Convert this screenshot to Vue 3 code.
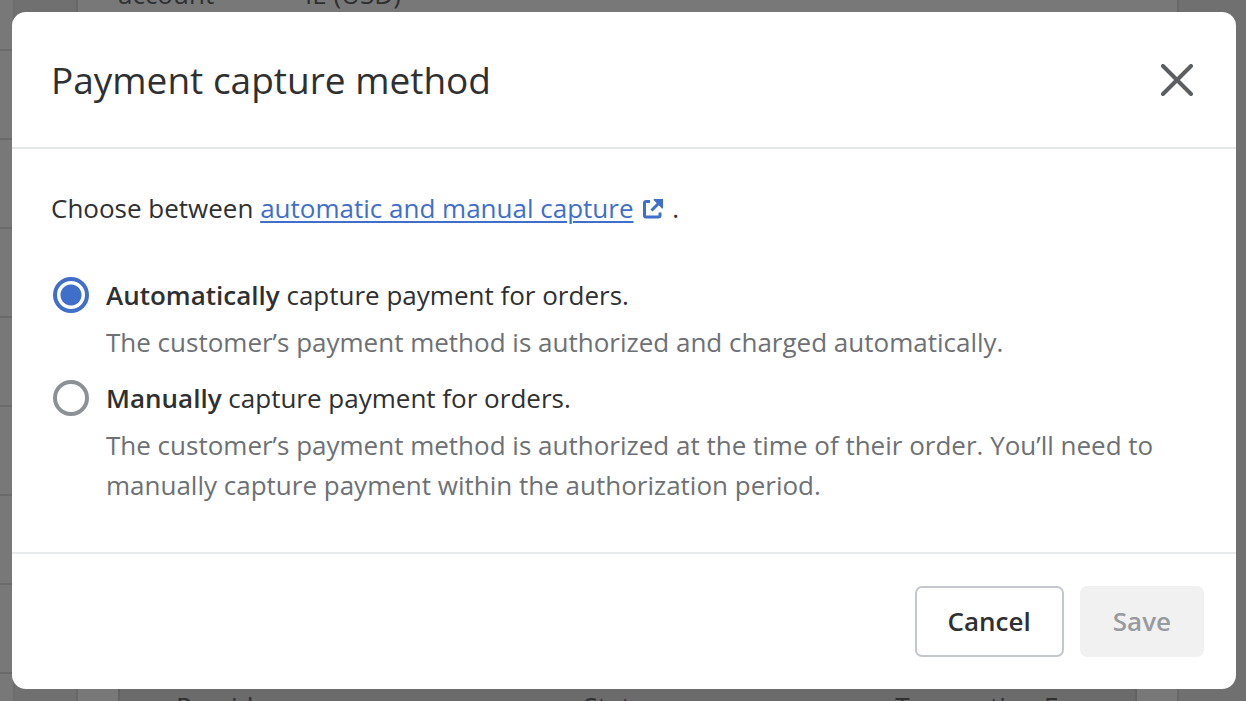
<template>
  <div class="page">
    <div class="shop" aria-hidden="true">
      <div class="shop-nav">
        <div v-for="n in 8" :key="n" class="shop-nav-item"></div>
      </div>
      <div class="shop-main">
        <div class="shop-card">
          <div class="account-row">
            <span class="account-label">account</span>
            <span>IE (USD)</span>
          </div>
          <div class="provider-row">
            <span v-for="column in columns" :key="column">{{ column }}</span>
          </div>
        </div>
      </div>
    </div>

    <div class="backdrop">
      <form
        class="modal"
        role="dialog"
        aria-modal="true"
        aria-labelledby="modal-title"
        @submit.prevent="save"
      >
        <header class="modal-header">
          <h2 id="modal-title" class="modal-title">Payment capture method</h2>
          <button type="button" class="close-button" aria-label="Close">
            <svg viewBox="0 0 32 32" width="32" height="32">
              <path d="M2 2 L30 30 M30 2 L2 30" />
            </svg>
          </button>
        </header>

        <div class="modal-body">
          <p class="intro">
            Choose between
            <a href="#" class="link">automatic and manual capture</a>
            <svg class="external-icon" viewBox="0 0 22 20" width="22" height="20">
              <path d="M8 2.5 H4 Q2.5 2.5 2.5 4 V16.5 Q2.5 18 4 18 H16.5 Q18 18 18 16.5 V13.5" />
              <path d="M9.5 11.5 L18 3" />
              <path class="external-head" d="M12 0 H21 V9.5 H20 L11.5 1 Z" />
            </svg>
            .
          </p>

          <div v-for="option in options" :key="option.value" class="option">
            <input
              :id="option.value"
              v-model="selected"
              type="radio"
              name="capture"
              class="option-radio"
              :value="option.value"
              :aria-describedby="`${option.value}-help`"
            >
            <div class="option-text">
              <label :for="option.value" class="option-label">
                <strong>{{ option.name }}</strong> capture payment for orders.
              </label>
              <p :id="`${option.value}-help`" class="option-help">{{ option.help }}</p>
            </div>
          </div>
        </div>

        <footer class="modal-footer">
          <button type="button" class="btn" @click="selected = saved">Cancel</button>
          <button type="submit" class="btn btn-save" :disabled="selected === saved">Save</button>
        </footer>
      </form>
    </div>
  </div>
</template>

<script setup>
import { ref } from 'vue'

const columns = ['Provider', 'Status', 'Transaction Fee']

const options = [
  {
    value: 'automatic',
    name: 'Automatically',
    help: 'The customer’s payment method is authorized and charged automatically.'
  },
  {
    value: 'manual',
    name: 'Manually',
    help: 'The customer’s payment method is authorized at the time of their order. You’ll need to manually capture payment within the authorization period.'
  }
]

const saved = ref('automatic')
const selected = ref('automatic')

const save = () => {
  saved.value = selected.value
}
</script>

<style>
body {
  margin: 0;
  background: #747474;
}
</style>

<style scoped>
.page {
  position: relative;
  height: 100vh;
  overflow: hidden;
  font-family: "Open Sans", "Noto Sans", sans-serif;
  font-size: 26px;
  line-height: 40px;
  color: #2e3032;
}

.shop {
  display: flex;
  height: 100%;
  background: #747474;
}

.shop-nav {
  width: 13px;
  margin-top: -38px;
  border-right: 2px solid #6c6c6c;
  background: #787878;
}

.shop-nav-item {
  height: 87px;
  border-bottom: 2px solid #6a6a6a;
}

.shop-main {
  flex: 1;
  padding: 0 67px 0 61px;
  background: #707070;
}

.shop-card {
  display: flex;
  flex-direction: column;
  justify-content: space-between;
  height: 100%;
  padding: 0 40px;
  border: solid #686868;
  border-width: 0 2px;
  box-sizing: border-box;
  background: #787878;
}

.account-row {
  display: flex;
  margin-top: -26px;
}

.account-label {
  width: 187px;
}

.provider-row {
  display: grid;
  grid-template-columns: 408fr 312fr 240fr;
  height: 15px;
  padding: 16px 0 0 56px;
  border: solid #626262;
  border-width: 0 2px;
  background: #6b6b6b;
  white-space: nowrap;
}

.backdrop {
  position: absolute;
  inset: 0;
  padding: 12px 10px 13px 12px;
}

.modal {
  display: flex;
  flex-direction: column;
  border-radius: 14px;
  background: #fff;
}

.modal-header {
  display: flex;
  align-items: center;
  justify-content: space-between;
  padding: 40px 43px 39px 39px;
  border-bottom: 2px solid #e4e6e8;
}

.modal-title {
  margin: 0;
  font-size: 37px;
  font-weight: 400;
  line-height: 56px;
}

.close-button {
  display: flex;
  padding: 0;
  border: 0;
  background: none;
  cursor: pointer;
}

.close-button svg {
  fill: none;
  stroke: #5c5f62;
  stroke-width: 4;
  stroke-linecap: round;
}

.modal-body {
  padding: 39px 39px 47px;
}

.intro {
  margin: 0 0 47px;
}

.link {
  color: #3f6fcb;
  text-decoration-thickness: 2px;
  text-underline-offset: 3px;
}

.external-icon {
  margin: 0 2px 0 8px;
  fill: none;
  stroke: #3f6fcb;
  stroke-width: 3;
  vertical-align: -1px;
}

.external-head {
  fill: #3f6fcb;
  stroke: none;
}

.option {
  display: flex;
  gap: 17px;
  margin-bottom: 16px;
}

.option:last-child {
  margin-bottom: 0;
}

.option-radio {
  flex: none;
  width: 36px;
  height: 36px;
  margin: 2px 0 0 2px;
  border: 4px solid #8c9196;
  border-radius: 50%;
  background: #fff;
  appearance: none;
}

.option-radio:checked {
  border-color: #3f6fcb;
  background: radial-gradient(circle, #3f6fcb 10px, #fff 11px);
}

.option-label {
  display: block;
}

.option-label strong {
  font-weight: 600;
}

.option-help {
  margin: 7px 0 0;
  color: #6d7175;
}

.modal-footer {
  display: flex;
  justify-content: flex-end;
  gap: 16px;
  padding: 32px;
  border-top: 2px solid #e8eaeb;
}

.btn {
  padding: 14px 31px;
  border: 2px solid #c4c8cc;
  border-radius: 7px;
  background: #fff;
  font: inherit;
  font-weight: 600;
  line-height: 39px;
  color: #2e3032;
}

.btn-save:disabled {
  border-color: #f1f1f1;
  background: #f1f1f1;
  color: #979ba0;
}
</style>
